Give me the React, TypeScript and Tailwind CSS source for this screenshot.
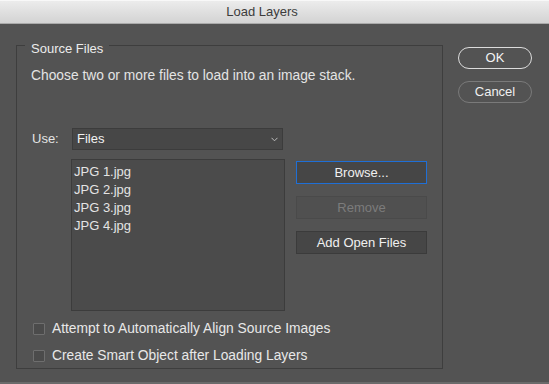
import React from "react";

const font = { fontFamily: '"Liberation Sans", Arial, sans-serif' };

function Check({ label }: { label: string }) {
  return (
    <div className="flex items-center h-[16px]">
      <div className="w-[12px] h-[12px] border border-[#6e6e6e] bg-[#4b4b4b] rounded-[1px]" />
      <span className="ml-[7px] text-[13.8px] leading-[16px] text-[#e8e8e8]">{label}</span>
    </div>
  );
}

function Btn({ label, variant }: { label: string; variant?: "focus" | "disabled" }) {
  const border =
    variant === "focus"
      ? "border-[#1f6fd6]"
      : variant === "disabled"
      ? "border-[#4a4a4a]"
      : "border-[#3b3b3b]";
  const bg = variant === "disabled" ? "bg-[#505050]" : "bg-[#464646]";
  const text = variant === "disabled" ? "text-[#7c7c7c]" : "text-[#f0f0f0]";
  return (
    <div className={`w-[131px] h-[23px] border ${border} ${bg} ${text} flex items-center justify-center text-[13px]`}>
      {label}
    </div>
  );
}

export default function App() {
  return (
    <div style={font} className="w-[549px] h-[384px] bg-[#535353] flex flex-col overflow-hidden">
      <div className="h-[24px] shrink-0 bg-gradient-to-b from-[#ececec] to-[#d3d3d3] border-b border-[#aaaaaa] border-t border-t-[#f8f8f8] flex items-center justify-center pr-[25px] text-[13px] text-[#3c3c3c]">
        Load Layers
      </div>
      <div className="flex pl-[16px] pt-[21px]">
        <div className="relative w-[427px] h-[324px] border border-[#3e3e3e]">
          <span className="absolute left-[8px] top-[-5px] bg-[#535353] px-[6px] text-[13px] leading-[16px] text-[#ececec]">
            Source Files
          </span>
          <div className="pl-[14px] pt-[22px] text-[13.8px] leading-[16px] text-[#e4e4e4]">
            Choose two or more files to load into an image stack.
          </div>
          <div className="flex items-center pl-[15px] mt-[44px]">
            <span className="w-[40px] text-[13px] text-[#e4e4e4]">Use:</span>
            <div className="w-[211px] h-[22px] bg-[#474747] border border-[#3c3c3c] flex items-center justify-between pl-[4px] pr-[4px] text-[13px] text-[#f2f2f2]">
              <span>Files</span>
              <svg width="7" height="5" viewBox="0 0 7 5">
                <path d="M0.5 0.8 L3.5 3.8 L6.5 0.8" fill="none" stroke="#bdbdbd" strokeWidth="1" />
              </svg>
            </div>
          </div>
          <div className="flex pl-[54px] mt-[9px]">
            <div className="w-[214px] h-[152px] bg-[#4b4b4b] border border-[#3c3c3c] pt-[3px] pl-[2px] text-[13px] leading-[18px] text-[#e4e4e4]">
              <div>JPG 1.jpg</div>
              <div>JPG 2.jpg</div>
              <div>JPG 3.jpg</div>
              <div>JPG 4.jpg</div>
            </div>
            <div className="ml-[11px] pt-[2px] flex flex-col gap-[12px]">
              <Btn label="Browse..." variant="focus" />
              <Btn label="Remove" variant="disabled" />
              <Btn label="Add Open Files" />
            </div>
          </div>
          <div className="pl-[16px] mt-[10px] flex flex-col gap-[11px]">
            <Check label="Attempt to Automatically Align Source Images" />
            <Check label="Create Smart Object after Loading Layers" />
          </div>
        </div>
        <div className="ml-[15px] flex flex-col gap-[12px] pt-[2px]">
          <div className="w-[74px] h-[22px] rounded-full border-[1.5px] border-[#dcdcdc] flex items-center justify-center text-[13px] text-[#f4f4f4]">
            OK
          </div>
          <div className="w-[74px] h-[22px] rounded-full border-[1.5px] border-[#7a7a7a] flex items-center justify-center text-[13px] text-[#f0f0f0]">
            Cancel
          </div>
        </div>
      </div>
      <div className="flex-1" />
      <div className="h-[2px] bg-[#6a6a6a]" />
    </div>
  );
}
